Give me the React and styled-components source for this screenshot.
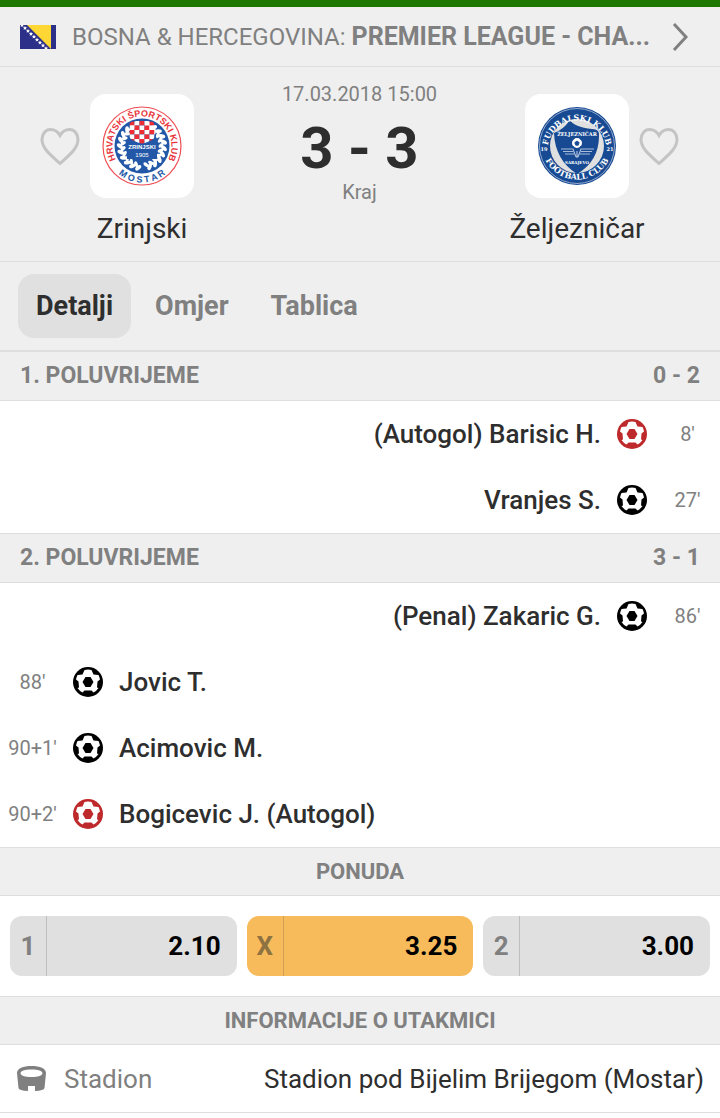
import React, { useState } from "react";
import styled, { createGlobalStyle } from "styled-components";

const Global = createGlobalStyle`
  *, *::before, *::after { box-sizing: border-box; }
  body {
    margin: 0;
    background: #fff;
    color: #2e2e2e;
    font-family: Roboto, "Noto Sans", "Liberation Sans", sans-serif;
    font-size: 24px;
    line-height: 32px;
  }
  button { font: inherit; color: inherit; border: 0; padding: 0; background: none; cursor: pointer; }
  h1, h2, p, ul, ol, dl, dd, dt { margin: 0; padding: 0; font: inherit; list-style: none; }
`;

const Page = styled.main`
  border-top: 7px solid #1d7800;
`;

const LeagueLink = styled.a`
  display: flex;
  align-items: center;
  gap: 16px;
  height: 60px;
  padding: 0 30px 0 20px;
  background: #efefef;
  border-bottom: 1px solid #dedede;
  color: #808080;
  text-decoration: none;
`;

const LeagueName = styled.span`
  flex: 1;
  min-width: 0;
  white-space: nowrap;
  overflow: hidden;
  text-overflow: ellipsis;
  font-size: 24px;

  b {
    font-size: 25px;
  }
`;

const Match = styled.section`
  display: flex;
  justify-content: space-between;
  padding: 27px 41px 16px 40px;
  background: #efefef;
  border-bottom: 1px solid #dedede;
`;

const Team = styled.div`
  display: grid;
  grid-template-columns: ${(p) => (p.$away ? "104px 40px" : "40px 104px")};
  grid-template-rows: 104px auto;
  column-gap: 10px;
  row-gap: 14px;
  align-items: center;
`;

const Crest = styled.div`
  grid-row: 1;
  grid-column: ${(p) => (p.$away ? 1 : 2)};
  display: grid;
  place-items: center;
  height: 104px;
  background: #fff;
  border-radius: 16px;
`;

const Favourite = styled.button`
  grid-row: 1;
  grid-column: ${(p) => (p.$away ? 2 : 1)};
  display: grid;
  color: #c4c4c4;
`;

const TeamName = styled.h2`
  grid-row: 2;
  grid-column: ${(p) => (p.$away ? 1 : 2)};
  justify-self: center;
  font-size: 28px;
  line-height: 33px;
`;

const Result = styled.div`
  display: flex;
  flex-direction: column;
  align-items: center;
  margin-top: -12px;
  color: #808080;
  font-size: 20px;
  line-height: 24px;
`;

const Score = styled.h1`
  padding-top: 10px;
  color: #2e2e2e;
  font-size: 58px;
  font-weight: 700;
  line-height: 64px;
`;

const Tabs = styled.nav`
  display: flex;
  gap: 6px;
  height: 89px;
  padding: 12px 18px;
  background: #efefef;
  border-bottom: 1px solid #dedede;
`;

const Tab = styled.button`
  && {
    height: 64px;
    padding: 0 18px;
    border-radius: 16px;
    font-size: 27px;
    font-weight: 700;
    background: ${(p) => (p.$active ? "#e0e0e0" : "transparent")};
    color: ${(p) => (p.$active ? "#2e2e2e" : "#808080")};
  }
`;

const SectionTitle = styled.h2`
  display: flex;
  justify-content: ${(p) => (p.$centered ? "center" : "space-between")};
  padding: 8px 20px;
  background: #efefef;
  border: solid #dedede;
  border-width: 1px 0;
  color: #808080;
  font-size: ${(p) => (p.$centered ? "22px" : "23px")};
  font-weight: 700;
  line-height: ${(p) => (p.$centered ? "31px" : "32px")};
`;

const Event = styled.li`
  display: flex;
  flex-direction: ${(p) => (p.$away ? "row-reverse" : "row")};
  align-items: center;
  gap: 16px;
  height: 66px;
  padding: 0 8px;
`;

const Minute = styled.time`
  width: 49px;
  display: flex;
  justify-content: center;
  white-space: nowrap;
  color: #808080;
  font-size: 20px;
`;

const Player = styled.span`
  font-size: 26px;
  font-weight: 500;
`;

const Odds = styled.div`
  display: grid;
  grid-template-columns: repeat(3, 1fr);
  gap: 10px;
  padding: 20px 10px;
`;

const Odd = styled.button`
  && {
    display: flex;
    align-items: center;
    height: 60px;
    border-radius: 12px;
    overflow: hidden;
    font-size: 26px;
    font-weight: 700;
    background: ${(p) => (p.$winning ? "#f7bb5b" : "#e0e0e0")};
    color: #000;
  }
`;

const Outcome = styled.span`
  display: grid;
  place-items: center;
  width: 37px;
  height: 60px;
  border-right: 1px solid ${(p) => (p.$winning ? "#cfa055" : "#bdbdbd")};
  color: ${(p) => (p.$winning ? "#8f7242" : "#808080")};
`;

const Price = styled.span`
  flex: 1;
  padding-right: 16px;
  text-align: right;
`;

const Info = styled.dl`
  display: flex;
  align-items: center;
  gap: 16px;
  height: 68px;
  padding: 0 16px;
  border-bottom: 1px solid #dedede;
  font-size: 26px;
`;

const InfoLabel = styled.dt`
  display: flex;
  align-items: center;
  gap: 16px;
  color: #808080;
`;

const InfoValue = styled.dd`
  flex: 1;
  text-align: right;
`;

function BosniaFlag() {
  return (
    <svg width="36" height="24" viewBox="0 0 36 24" aria-hidden="true">
      <rect width="36" height="24" fill="#2d3088" />
      <path d="M7 0h24v24z" fill="#ffd734" />
      <g fill="#fff">
        {[0, 1, 2, 3, 4, 5, 6, 7, 8].map((i) => (
          <path
            key={i}
            transform={`translate(${2 + i * 3} ${i * 2.9})`}
            d="M0-2 .6-.6 2-.5 1 .5 1.3 2 0 1.2-1.3 2-1 .5-2-.5-.6-.6z"
          />
        ))}
      </g>
    </svg>
  );
}

function Chevron() {
  return (
    <svg width="18" height="30" viewBox="0 0 18 30" aria-hidden="true">
      <path d="M2 2l12 13L2 28" fill="none" stroke="#808080" strokeWidth="3" />
    </svg>
  );
}

function Heart() {
  return (
    <svg width="40" height="40" viewBox="0 0 40 40" aria-hidden="true">
      <path
        d="M20 9.500C17.500 5 14 3.500 10.500 3.500 5.500 3.500 2 8 2 13.500 2 23 12 30 20 37.500 28 30 38 23 38 13.500 38 8 34.500 3.500 29.500 3.500 26 3.500 22.500 5 20 9.500z"
        fill="none"
        stroke="currentColor"
        strokeWidth="3"
      />
    </svg>
  );
}

function Ball({ own }) {
  return (
    <svg width="30" height="30" viewBox="0 0 30 30" role="img" aria-label={own ? "Autogol" : "Gol"}>
      <circle cx="15" cy="15" r="15" fill={own ? "#be2a2c" : "#000"} />
      <path
        fill="#fff"
        d="M11.500 3Q15 2 18.500 3L20.500 7.500 25.500 8Q26.500 10 27 12.500L24.500 14.500 24 20.500 25.500 21Q23.500 24 20.500 25.500L18.500 23.500H11.500L9.500 25.500Q6.500 24 4.500 21L6 20.500 5.500 14.500 3 12.500Q3.500 10 4.500 8L9.500 7.500z"
      />
      <path fill={own ? "#be2a2c" : "#000"} d="M12.500 10h5l3 5-3 5h-5l-3-5z" />
    </svg>
  );
}

function Stadium() {
  return (
    <svg width="32" height="26" viewBox="0 0 32 26" aria-hidden="true">
      <path
        fill="#808080"
        fillRule="evenodd"
        d="M15.500 0C24 0 30 2.500 30 7L28.500 22Q28 24.500 19 25V20H12V25Q3 24.500 2.500 22L1 7C1 2.500 7 0 15.500 0zM15.500 3.500C9 3.500 4.500 5 4.500 7.200S9 11 15.500 11 26.500 9.500 26.500 7.200 22 3.500 15.500 3.500z"
      />
    </svg>
  );
}

function ZrinjskiCrest() {
  const checks = [];
  for (let r = 0; r < 5; r++)
    for (let c = 0; c < 5; c++)
      checks.push(
        <rect key={`${r}-${c}`} x={27.5 + c * 5} y={15 + r * 4.5} width="5" height="4.500" fill={(r + c) % 2 ? "#fff" : "#ee2c35"} />
      );
  const leaves = [];
  for (let a = 15; a <= 160; a += 16)
    for (const side of [-1, 1]) {
      const angle = 90 + side * a;
      leaves.push(
        <g key={angle} transform={`rotate(${angle} 40 40)`}>
          <ellipse cx="62" cy="38" rx="3.500" ry="2" transform="rotate(35 62 38)" />
          <ellipse cx="59" cy="41" rx="3" ry="1.700" transform="rotate(-35 59 41)" />
        </g>
      );
    }
  return (
    <svg width="80" height="80" viewBox="0 0 80 80" role="img" aria-label="HŠK Zrinjski Mostar">
      <defs>
        <path id="zr-top" d="M15 55.500A29.500 29.500 0 1 1 65 55.500" />
        <path id="zr-bottom" d="M5 49A36 36 0 0 0 75 49" />
        <clipPath id="zr-shield">
          <path d="M29 16q11-3 22 0l1.500 2v13q0 3-12.500 7-12.500-4-12.500-7V18z" />
        </clipPath>
      </defs>
      <circle cx="40" cy="40" r="39" fill="#fff" stroke="#ee4c53" strokeWidth="1.200" />
      <circle cx="40" cy="40" r="27.500" fill="#2358a8" />
      <g fill="#fff">{leaves}</g>
      <path d="M25 36h30v17H25z" fill="#2358a8" />
      <g clipPath="url(#zr-shield)">{checks}</g>
      <g fontFamily="Liberation Sans, sans-serif" fontWeight="700">
        <text fontSize="9" fill="#e8343c" textAnchor="middle">
          <textPath href="#zr-top" startOffset="50%">HRVATSKI ŠPORTSKI KLUB</textPath>
        </text>
        <text fontSize="9" fill="#2358a8" textAnchor="middle">
          <textPath href="#zr-bottom" startOffset="50%">M O S T A R</textPath>
        </text>
        <text x="40" y="43" fontSize="6" fill="#fff" textAnchor="middle">ZRINJSKI</text>
        <text x="40" y="51" fontSize="6" fontWeight="400" fill="#fff" textAnchor="middle">1905</text>
      </g>
    </svg>
  );
}

function ZeljeznicarCrest() {
  return (
    <svg width="80" height="80" viewBox="0 0 80 80" role="img" aria-label="FK Željezničar Sarajevo">
      <defs>
        <path id="ze-top" d="M10.500 44A29.500 29.500 0 1 1 69.500 44" />
        <path id="ze-bottom" d="M5 44A35.500 35.500 0 0 0 75 44" />
      </defs>
      <circle cx="40" cy="40" r="39" fill="#174a93" />
      <circle cx="40" cy="40" r="37.500" fill="none" stroke="#c8d3e5" strokeWidth=".7" />
      <circle cx="40" cy="40" r="27" fill="#e0e0e0" />
      <path d="M33 14q4 7 22 9 8 0 7 7 0 25-22 38Q18 54 17 27q9-3 16-13z" fill="#174a93" />
      <g fontFamily="DejaVu Serif, serif" fontWeight="700" fill="#fff">
        <text fontSize="8" textAnchor="middle">
          <textPath href="#ze-top" startOffset="50%">FUDBALSKI KLUB</textPath>
        </text>
        <text fontSize="8" textAnchor="middle">
          <textPath href="#ze-bottom" startOffset="50%">FOOTBALL CLUB</textPath>
        </text>
        <text x="40" y="30" fontSize="5" textAnchor="middle">ŽELJEZNIČAR</text>
        <text x="40" y="58" fontSize="4" textAnchor="middle">SARAJEVO</text>
        <text x="7" y="45" fontSize="5" textAnchor="middle">19</text>
        <text x="73" y="45" fontSize="5" textAnchor="middle">21</text>
      </g>
      <circle cx="40" cy="37" r="5" fill="#fff" />
      <path d="M40 35l2.200 1.600-.9 2.600h-2.600l-.9-2.600zM35.500 34l2-1.500M44.500 34l-2-1.500M36 40l1.500 1.500M44 40l-1.500 1.500" fill="#174a93" stroke="#174a93" strokeWidth=".8" />
      <path d="M24 43h12l3 8M26 45.500h10M28 48h9M57 43H44l-3 8M55 45.500H44M53 48H43M40 45v7" fill="none" stroke="#a9bddb" strokeWidth="1.200" />
    </svg>
  );
}

const halves = [
  {
    title: "1. POLUVRIJEME",
    score: "0 - 2",
    events: [
      { away: true, own: true, minute: "8'", player: "(Autogol) Barisic H." },
      { away: true, minute: "27'", player: "Vranjes S." },
    ],
  },
  {
    title: "2. POLUVRIJEME",
    score: "3 - 1",
    events: [
      { away: true, minute: "86'", player: "(Penal) Zakaric G." },
      { minute: "88'", player: "Jovic T." },
      { minute: "90+1'", player: "Acimovic M." },
      { own: true, minute: "90+2'", player: "Bogicevic J. (Autogol)" },
    ],
  },
];

const odds = [
  { outcome: "1", price: "2.10" },
  { outcome: "X", price: "3.25", winning: true },
  { outcome: "2", price: "3.00" },
];

export default function App() {
  const [tab, setTab] = useState("Detalji");
  return (
    <>
      <Global />
      <Page>
        <LeagueLink href="#liga">
          <BosniaFlag />
          <LeagueName>
            BOSNA &amp; HERCEGOVINA: <b>PREMIER LEAGUE - CHA...</b>
          </LeagueName>
          <Chevron />
        </LeagueLink>

        <Match>
          <Team>
            <Favourite aria-label="Zrinjski"><Heart /></Favourite>
            <Crest><ZrinjskiCrest /></Crest>
            <TeamName>Zrinjski</TeamName>
          </Team>
          <Result>
            <p>17.03.2018 15:00</p>
            <Score>3 - 3</Score>
            <p>Kraj</p>
          </Result>
          <Team $away>
            <Crest $away><ZeljeznicarCrest /></Crest>
            <Favourite $away aria-label="Željezničar"><Heart /></Favourite>
            <TeamName $away>Željezničar</TeamName>
          </Team>
        </Match>

        <Tabs>
          {["Detalji", "Omjer", "Tablica"].map((name) => (
            <Tab key={name} $active={tab === name} onClick={() => setTab(name)}>
              {name}
            </Tab>
          ))}
        </Tabs>

        {halves.map((half) => (
          <section key={half.title}>
            <SectionTitle>
              <span>{half.title}</span>
              <span>{half.score}</span>
            </SectionTitle>
            <ol>
              {half.events.map((e) => (
                <Event key={e.minute} $away={e.away}>
                  <Minute>{e.minute}</Minute>
                  <Ball own={e.own} />
                  <Player>{e.player}</Player>
                </Event>
              ))}
            </ol>
          </section>
        ))}

        <section>
          <SectionTitle $centered>PONUDA</SectionTitle>
          <Odds>
            {odds.map((o) => (
              <Odd key={o.outcome} $winning={o.winning}>
                <Outcome $winning={o.winning}>{o.outcome}</Outcome>
                <Price>{o.price}</Price>
              </Odd>
            ))}
          </Odds>
        </section>

        <section>
          <SectionTitle $centered>INFORMACIJE O UTAKMICI</SectionTitle>
          <Info>
            <InfoLabel>
              <Stadium />
              Stadion
            </InfoLabel>
            <InfoValue>Stadion pod Bijelim Brijegom (Mostar)</InfoValue>
          </Info>
        </section>
      </Page>
    </>
  );
}
